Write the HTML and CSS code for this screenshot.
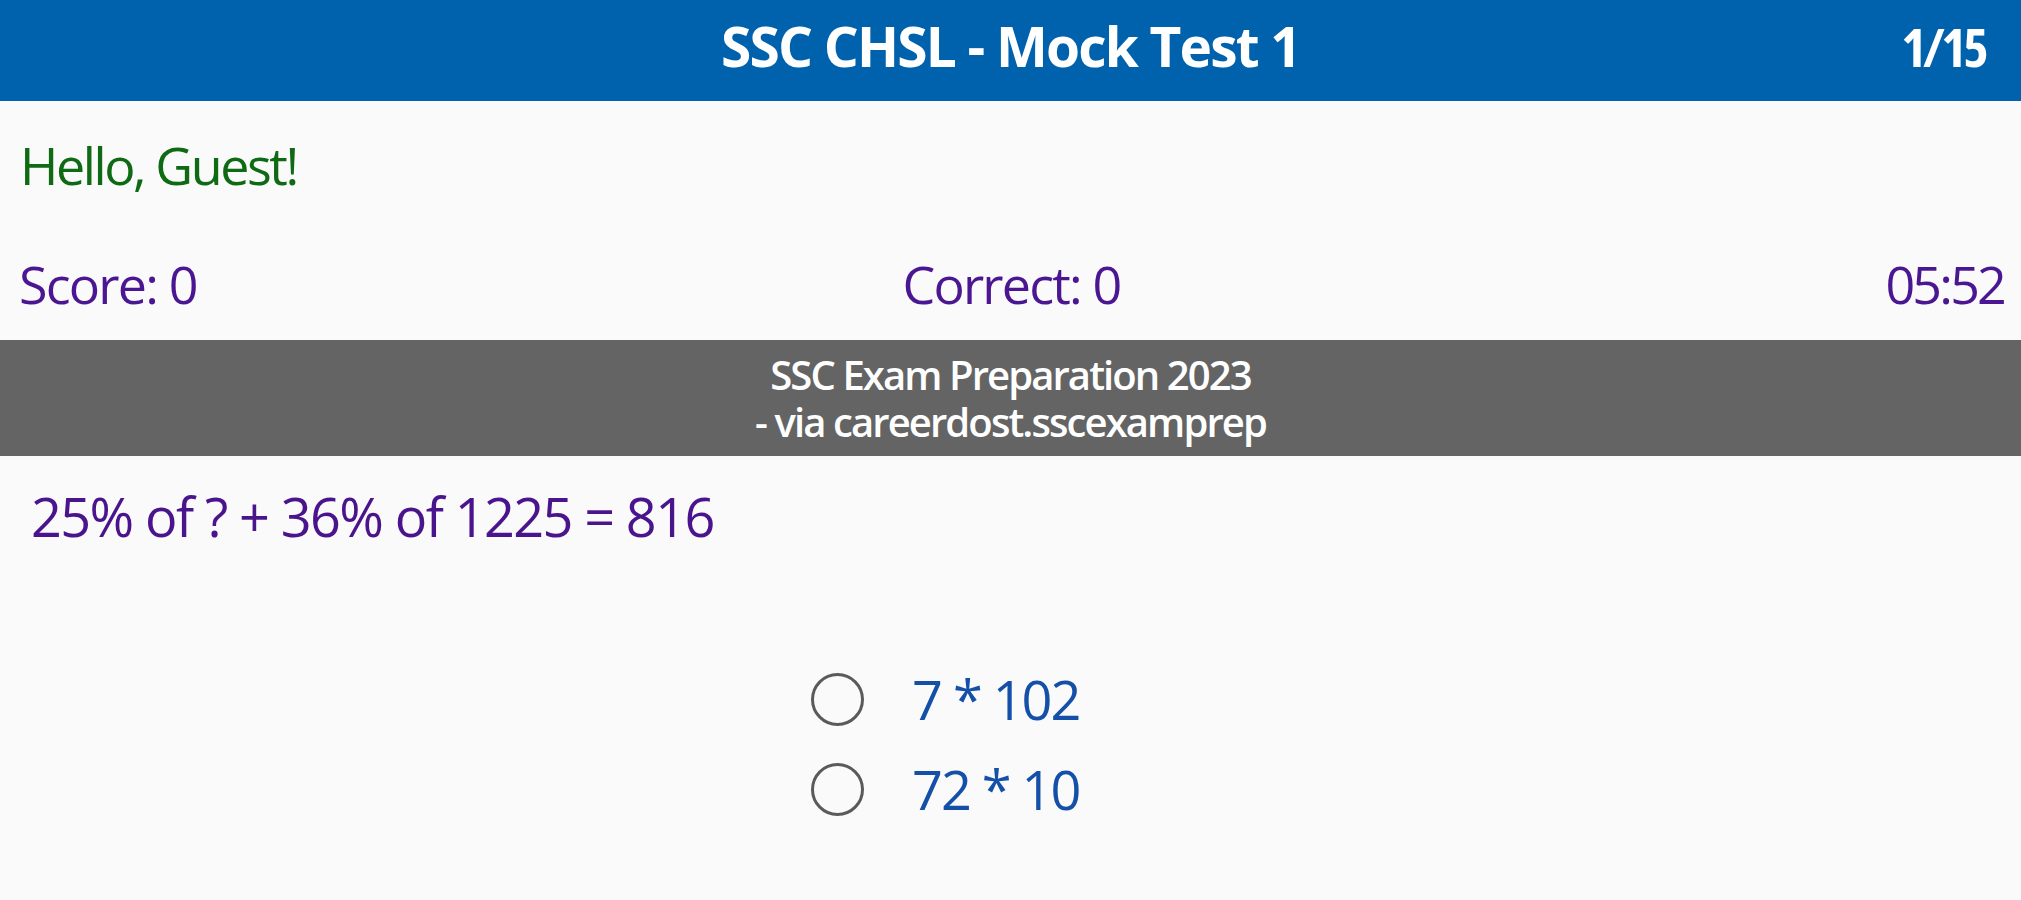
FILE: index.html
```html
<!DOCTYPE html>
<html lang="en">
<head>
<meta charset="utf-8">
<title>SSC CHSL - Mock Test 1</title>
<link rel="stylesheet" href="styles.css">
</head>
<body>
<header class="topbar">
  <div class="topbar-spacer"></div>
  <h1 class="topbar-title">SSC CHSL - Mock Test 1</h1>
  <div class="topbar-count">1/15</div>
</header>
<main class="quiz">
  <p class="greeting">Hello, Guest!</p>
  <div class="stats">
    <span class="stat stat-left">Score: 0</span>
    <span class="stat stat-mid">Correct: 0</span>
    <span class="stat stat-right">05:52</span>
  </div>
  <div class="banner">
    <div class="banner-line">SSC Exam Preparation 2023</div>
    <div class="banner-line">- via careerdost.sscexamprep</div>
  </div>
  <p class="question">25% of ? + 36% of 1225 = 816</p>
  <ul class="options">
    <li class="option"><span class="radio"></span><span class="option-text">7 * 102</span></li>
    <li class="option"><span class="radio"></span><span class="option-text">72 * 10</span></li>
  </ul>
</main>
</body>
</html>
```

FILE: styles.css
```css
html, body {
  margin: 0;
  padding: 0;
}
body {
  background: #fafafa;
  font-family: "Open Sans", "Noto Sans", "Liberation Sans", sans-serif;
  font-stretch: 100%;
}
.topbar {
  height: 101px;
  background: #0061ac;
  display: grid;
  grid-template-columns: 1fr auto 1fr;
  align-items: center;
  color: #ffffff;
  padding: 0 0 10px 0;
  box-sizing: border-box;
}
.topbar-title {
  margin: 0;
  font-size: 55px;
  font-weight: 700;
  line-height: 60px;
  letter-spacing: -1.8px;
}
.topbar-count {
  justify-self: end;
  padding-right: 36px;
  font-size: 54px;
  font-weight: 700;
  line-height: 60px;
  font-stretch: 75%;
  letter-spacing: -3.5px;
}
.quiz {
  display: flex;
  flex-direction: column;
}
.greeting {
  margin: 34px 0 0 20px;
  font-size: 52px;
  line-height: 60px;
  color: #0f6a14;
  letter-spacing: -2.4px;
}
.stats {
  margin-top: 59px;
  display: grid;
  grid-template-columns: 1fr auto 1fr;
  padding: 0 17px 0 19px;
  font-size: 52px;
  line-height: 60px;
  color: #4a1691;
  letter-spacing: -1.8px;
}
.stat-mid { justify-self: center; }
.stat-right { justify-self: end; letter-spacing: -2.8px; }
.banner {
  margin-top: 26px;
  height: 116px;
  box-sizing: border-box;
  padding-top: 11px;
  background: #646464;
  color: #ffffff;
  text-align: center;
  font-size: 40px;
  font-weight: 600;
  line-height: 47px;
  letter-spacing: -1.9px;
}
.question {
  margin: 30px 0 0 31px;
  font-size: 54px;
  line-height: 60px;
  color: #4a148c;
  font-weight: 500;
  letter-spacing: -1.6px;
}
.options {
  list-style: none;
  margin: 108px 0 0 0;
  padding: 0 0 0 811px;
  display: flex;
  flex-direction: column;
}
.option {
  height: 90px;
  display: flex;
  align-items: center;
}
.radio {
  width: 53px;
  height: 53px;
  box-sizing: border-box;
  border: 3px solid #5a5a5a;
  border-radius: 50%;
  flex: none;
}
.option-text {
  margin-left: 48px;
  font-size: 54px;
  line-height: 60px;
  color: #1550a8;
  letter-spacing: -2px;
}
```
